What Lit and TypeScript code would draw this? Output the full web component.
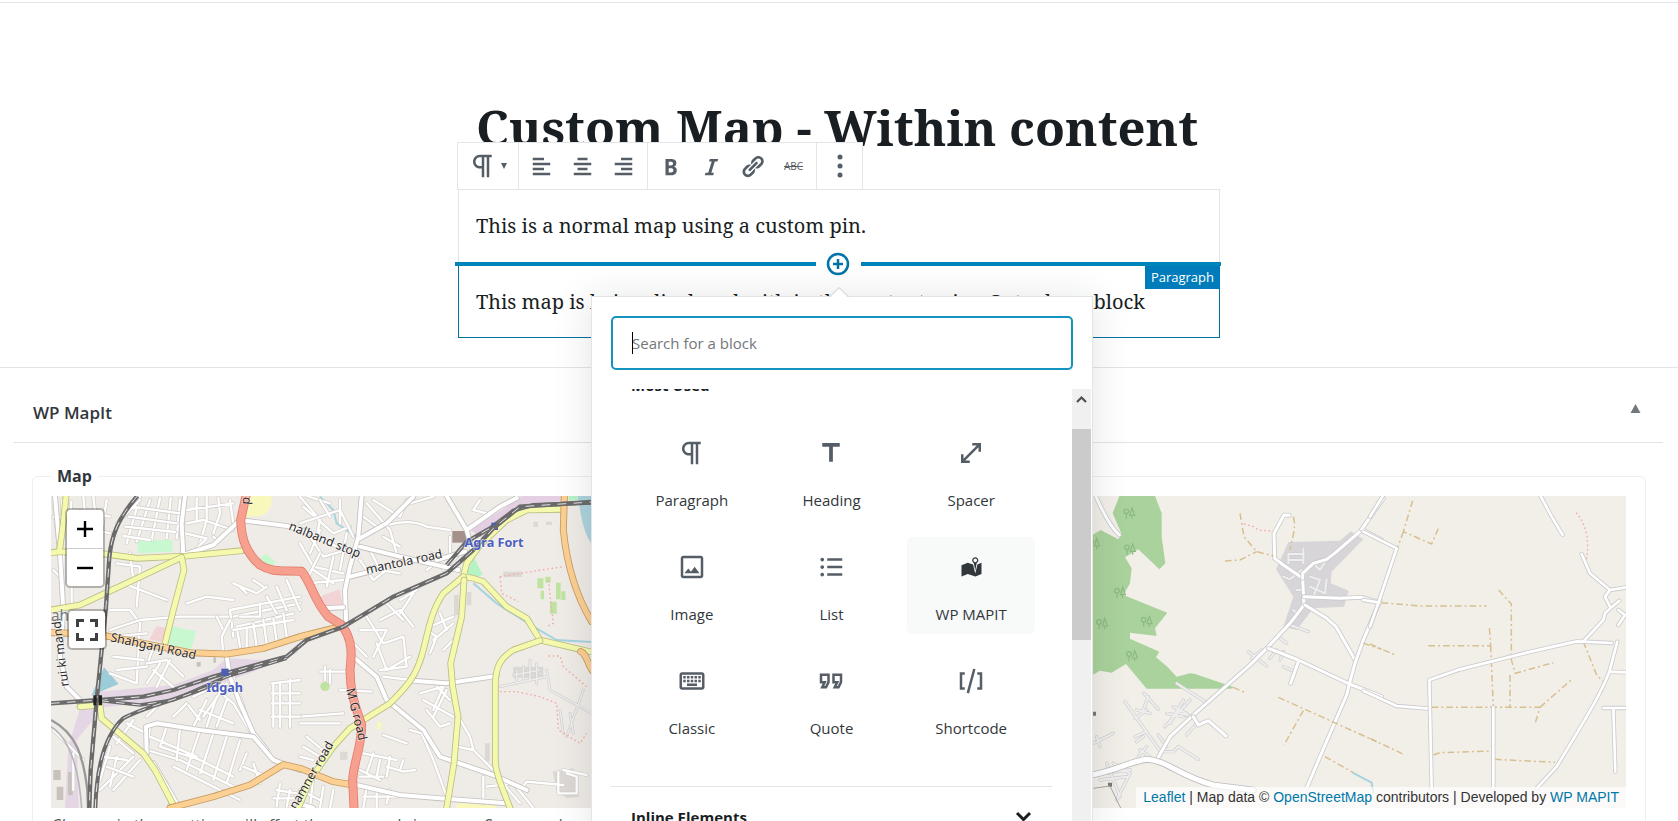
import { LitElement, html, svg, css } from "lit";
import { customElement } from "lit/decorators.js";

type BlockType = { label: string; icon: string; size?: number; active?: boolean };

const PARAGRAPH =
  "M11 5v7H9.5C7.6 12 6 10.4 6 8.5S7.6 5 9.5 5H11m8-2H9.5C6.5 3 4 5.5 4 8.5S6.5 14 9.5 14H11v7h2V5h2v16h2V5h2V3z";

const ALIGNMENTS = [
  { label: "Align left", d: "M12 5V3H3v2h9zm5 4V7H3v2h14zm-5 4v-2H3v2h9zm5 4v-2H3v2h14z" },
  { label: "Align center", d: "M14 5V3H6v2h8zm3 4V7H3v2h14zm-3 4v-2H6v2h8zm3 4v-2H3v2h14z" },
  { label: "Align right", d: "M17 5V3H8v2h9zm0 4V7H3v2h14zm0 4v-2H8v2h9zm0 4v-2H3v2h14z" },
];

const FORMATS = [
  {
    label: "Bold",
    d: "M6 4v13h4.54c1.37 0 2.46-.33 3.26-1 .8-.66 1.2-1.58 1.2-2.77 0-.84-.17-1.51-.51-2.01s-.9-.85-1.67-1.03v-.09c.57-.1 1.02-.4 1.36-.9s.51-1.13.51-1.91c0-1.14-.39-1.98-1.17-2.5C12.75 4.26 11.5 4 9.78 4H6zm2.57 5.15V6.26h1.36c.73 0 1.27.11 1.61.32.34.22.51.58.51 1.07 0 .54-.16.92-.47 1.15s-.82.35-1.51.35h-1.5zm0 2.19h1.6c1.44 0 2.16.53 2.16 1.61 0 .6-.17 1.05-.51 1.34s-.86.43-1.57.43H8.57v-3.38z",
  },
  { label: "Italic", d: "M14.78 6h-2.13l-2.8 9h2.12l-.62 2H4.6l.62-2h2.14l2.8-9H8.03l.62-2h6.75z" },
  {
    label: "Link",
    d: "M17.74 2.76c1.68 1.69 1.68 4.41 0 6.1l-1.53 1.52c-1.12 1.12-2.7 1.47-4.14 1.09l2.62-2.61.76-.77.76-.76c.84-.84.84-2.2 0-3.04-.84-.85-2.2-.85-3.04 0l-.77.76-3.38 3.38c-.37-1.44-.02-3.02 1.1-4.14l1.52-1.53c1.69-1.68 4.42-1.68 6.1 0zM8.59 13.43l5.34-5.34c.42-.42.42-1.1 0-1.52-.44-.43-1.13-.39-1.53 0l-5.33 5.34c-.42.42-.42 1.1 0 1.52.44.43 1.13.39 1.52 0zm-.76 2.29l4.14-4.15c.38 1.44.03 3.02-1.09 4.14l-1.52 1.53c-1.69 1.68-4.41 1.68-6.1 0-1.68-1.68-1.68-4.42 0-6.1l1.53-1.52c1.12-1.12 2.7-1.47 4.14-1.1l-4.14 4.15c-.85.84-.85 2.2 0 3.05.84.84 2.2.84 3.04 0z",
  },
];

const BLOCKS: BlockType[] = [
  { label: "Paragraph", icon: PARAGRAPH },
  { label: "Heading", icon: "M5 4v3h5.5v12h3V7H19V4z" },
  { label: "Spacer", icon: "M13 4v2h3.59L6 16.59V13H4v7h7v-2H7.41L18 7.41V11h2V4h-7" },
  {
    label: "Image",
    icon: "M19 5v14H5V5h14m0-2H5c-1.1 0-2 .9-2 2v14c0 1.1.9 2 2 2h14c1.1 0 2-.9 2-2V5c0-1.1-.9-2-2-2zM14.14 11.86l-3 3.87L9 13.14 6 17h12l-3.86-5.14z",
  },
  {
    label: "List",
    icon: "M9 19h12v-2H9v2zm0-6h12v-2H9v2zm0-8v2h12V5H9zm-4-.5c-.83 0-1.5.67-1.5 1.5S4.17 7.5 5 7.5 6.5 6.83 6.5 6 5.83 4.5 5 4.5zm0 6c-.83 0-1.5.67-1.5 1.5s.67 1.5 1.5 1.5 1.5-.67 1.5-1.5-.67-1.5-1.5-1.5zm0 6c-.83 0-1.5.67-1.5 1.5s.67 1.5 1.5 1.5 1.5-.67 1.5-1.5-.67-1.5-1.5-1.5z",
  },
  {
    label: "WP MAPIT",
    size: 20,
    active: true,
    icon: "M13 13.14l1.17-5.94c.79-.43 1.33-1.25 1.33-2.2 0-1.38-1.12-2.5-2.5-2.5S10.5 3.62 10.5 5c0 .95.54 1.77 1.33 2.2zm0-9.64c.83 0 1.5.67 1.5 1.5s-.67 1.5-1.5 1.5-1.5-.67-1.5-1.5.67-1.5 1.5-1.5zm1.72 4.8L18 6.97v9L13.12 18 7 15.97l-5 2v-9l5-2 4.27 1.41 1.73 7.3z",
  },
  {
    label: "Classic",
    icon: "M20 7v10H4V7h16m0-2H4c-1.1 0-2 .9-2 2v10c0 1.1.9 2 2 2h16c1.1 0 2-.9 2-2V7c0-1.1-.9-2-2-2zM11 8h2v2h-2zM11 11h2v2h-2zM8 8h2v2H8zM8 11h2v2H8zM5 11h2v2H5zM5 8h2v2H5zM8 14h8v2H8zM14 11h2v2h-2zM14 8h2v2h-2zM17 11h2v2h-2zM17 8h2v2h-2z",
  },
  {
    label: "Quote",
    icon: "M18.62 18h-5.24l2-4H13V6h8v7.24L18.62 18zm-2-2h.76L19 12.76V8h-4v4h3.62l-2 4zm-8 2H3.38l2-4H3V6h8v7.24L8.62 18zm-2-2h.76L9 12.76V8H5v4h3.62l-2 4z",
  },
  {
    label: "Shortcode",
    icon: "M8.5 21.4l1.9.5 5.2-19.3-1.9-.5-5.2 19.3zM3 19h4v-2H5V7h2V5H3v14zM17 5v2h2v10h-2v2h4V5h-4z",
  },
];

/* A street is a wide casing line with a narrower fill on top. */
const way = (d: string, fill: string, casing: string, width: number, edge = 5) => svg`
  <path d=${d} fill="none" stroke=${casing} stroke-width=${width + edge} stroke-linejoin="round" stroke-linecap="round" />
  <path d=${d} fill="none" stroke=${fill} stroke-width=${width} stroke-linejoin="round" stroke-linecap="round" />`;

const minor = (d: string) => way(d, "#fff", "#d0cdcb", 7, 4);
const street = (d: string) => way(d, "#fff", "#c4c1c0", 12);
const yellow = (d: string) => way(d, "#f4f9ad", "#b9bd80", 15);
const orange = (d: string) => way(d, "#fccf93", "#c49b60", 16);
const red = (d: string) => way(d, "#f8a08f", "#e07d6e", 22);
const rail = (d: string, width = 10) => svg`
  <path d=${d} fill="none" stroke="#6a6a6a" stroke-width=${width} />
  <path d=${d} fill="none" stroke="#e6e4e4" stroke-width="3" stroke-dasharray="26 22" />`;
const track = (d: string) => svg`
  <path d=${d} fill="none" stroke="#d8bf90" stroke-width="4.5" stroke-dasharray="20 9 6 9" />`;
const path = (d: string) => svg`
  <path d=${d} fill="none" stroke="#f3aaa2" stroke-width="4" stroke-dasharray="5 8" />`;

/* The street network left of the railway, and the dense blocks around it. */
const westTown = svg`
  <path fill="#e4d6e4" d="M240 715 L300 665 L520 645 L640 600 L680 565 L790 570 L900 545 L760 605 L520 690 L310 712 L230 810 L236 1014 L195 1014 L205 830Z" />
  <path fill="#c8f8d0" d="M415 210H518V245L412 250Z M512 468L588 484L574 538L498 524Z M780 262L800 252L826 276L816 292L786 280Z" />
  <path fill="#f2d3d6" d="M470 468L515 478L495 520L448 508Z" />
  <path fill="#f9f8bc" d="M745 78H812C822 100 806 140 770 138L738 142Z" />
  <path fill="#9ccbd9" d="M312 592L356 642L318 658L274 678L290 640Z" />
  <g fill="#c8c2bd"><path d="M160 900h22v30h-22z M170 950h20v40h-20z M204 906h14v70h-14z M590 576h12v14h-12z M640 562h8v16h-8z" /></g>
  ${[
    "M160 90L172 200M186 90V200M214 96L210 190M190 250V410M160 300L190 330M215 350V400L190 420M160 140H200",
    "M220 120L330 140M250 78L262 210M280 78L290 170M240 170L330 190M320 90L300 210",
    "M420 80L380 220M450 90L410 215M480 84L455 210M512 84L500 205M540 90L530 205",
    "M396 110L540 130M386 140L530 160M376 170L526 186M370 198L450 210M350 160L420 90",
    "M560 120L700 100M590 84V150M620 80V150L600 220M655 84L660 130L640 190M690 90L700 160M560 160L610 150L700 180",
    "M556 190L620 205L590 236M640 200L655 215",
    "M350 280L420 290L410 410M370 340L500 390M390 250L400 330M330 420L390 420L420 460L410 640L330 610",
    "M330 480L420 450L540 440L700 440L900 400M340 500L440 490M340 560L430 570M350 600L440 590L460 530",
    "M650 440L670 480M560 400L620 380L700 390M700 340L770 370L800 350M720 350L740 370M760 330L790 350",
    "M780 400V440L720 440M800 380L830 430M830 350L860 420M860 330L900 420M700 500L690 420L900 380M720 530L710 470L880 430",
    "M740 540V480M770 530L760 460M800 520L790 450M830 515L820 445M860 500L850 430M700 480L880 450M670 550L665 500L690 450",
    "M440 580L500 570L550 620M460 600L530 660M480 580L440 640M510 570L470 650",
    "M580 680L640 650L700 700L760 800M600 720L700 760M620 690L580 770M650 680L620 770M680 690L650 770M560 700L600 750M700 620L740 740M680 640L610 740",
    "M450 770L440 840L540 870L700 950M500 770L480 830L600 870M540 775L530 870M450 800L590 860M600 780L560 900M640 790L600 910M680 800L640 930M720 810L680 940M520 890L720 990M560 850L700 920M740 850L720 900",
    "M400 750L350 820M380 760L440 790M340 800L400 850M310 860L380 870M330 830L300 930M400 860L300 960M420 870L340 960M350 860L330 950M440 870L500 940L510 1000",
    "M320 890L400 920M440 740L480 700M520 740L560 700M820 640V770M840 640V770M870 630V770M900 630L815 640M815 670H900M815 700H900M815 740H900",
    "M760 880L780 940M730 890L800 920M830 960L890 970M840 940L830 1010M870 960L860 1010M820 985H900M220 850V960M160 780L250 870",
  ].map(minor)}
  ${[
    "M165 78L180 250L190 420L180 560L200 650L240 690",
    "M555 78L545 160L550 255L640 225L720 150",
    "M680 560L690 620L720 700L760 790L800 840",
    "M440 850L438 770L470 760L600 780L760 800L820 870L900 900",
    "M530 1000L460 880",
    "M735 152L860 168L920 185",
  ].map(street)}
  ${yellow("M198 78L190 160L178 245L153 248 M178 245L300 250L410 265L560 258L725 242")}
  ${yellow("M153 420L240 405L380 340L545 262L552 300L520 420L495 520 M240 710L300 705L305 745L430 850L465 900L525 1014")}
  ${orange("M153 488H180L320 498L430 520L570 548L680 552L790 535L900 500L980 480L1022 470")}
  ${orange("M510 1014L640 980L750 945L850 884L900 895L1000 935L1060 945")}
  ${red("M738 78L722 150C724 210 740 250 780 285C820 310 850 300 905 304C935 340 940 390 985 440L1025 465C1060 510 1055 560 1050 600C1050 680 1075 730 1085 765C1085 830 1060 880 1058 930L1062 1014")}
  <path d="M153 750C230 790 250 860 262 960L264 1014" fill="none" stroke="#9b989a" stroke-width="7" />
  <path d="M153 770C200 800 235 870 245 1014" fill="none" stroke="#b9b5b9" stroke-width="5" />
  ${rail("M412 78C350 150 335 200 328 260L318 410L306 530L290 690L272 900L268 1014", 13)}
  ${rail("M153 700L300 690L430 680L520 660L640 620L860 560L920 510L1030 470L1180 380L1340 310L1420 240L1480 175L1560 110L1775 96", 13)}
  ${rail("M300 692L420 705L520 690L680 620L860 565", 10)}
  ${rail("M286 1014C290 880 320 790 370 745C430 710 540 690 660 635", 12)}
`;

const eastTown = svg`
  <path fill="#e4d0e2" d="M510 178L610 118L665 78H785V92L660 112L600 160L545 205Z" />
  <path fill="#add3de" d="M832 78H875V222C845 180 842 120 832 78Z" />
  <path fill="#b6f3c4" d="M522 262L548 315L520 322L500 310Z M806 78H830L835 90L806 92Z" />
  <path fill="#f2d3d6" d="M58 380L118 358L130 410L80 412Z" />
  <path fill="#a3918a" d="M457 183H498V218H457Z" />
  <path fill="#f9f8bc" d="M470 1000H580L590 1014H470Z M232 752L246 758L242 780L230 776Z" />
  <g fill="#bfe3a0"><path d="M712 325h18v30h-18z M736 320h16v18h-16z M768 338h14v50h-14z M784 364h12v26h-12z M722 362h10v26h-10z M750 395h20v36h-20z" /></g>
  <circle cx="75" cy="649" r="14" fill="#bfe3a0" />
  <g fill="#dcd8d4"><path d="M758 905L820 895L838 980L800 985L770 960Z M462 375h14v60h-14z M500 366h14v40h-14z M640 590h90v34h-90z M555 820h14v54h-14z M120 845h22v24h-22z M700 155h14v16h-14z M738 155h18v10h-18z M610 305h56v16h-56z" /></g>
  <path d="M60 80L100 120L110 160L170 200M520 340L590 400L700 470L770 510L875 516" fill="none" stroke="#a5d3e0" stroke-width="6" />
  ${[
    "M0 80L60 150L50 200L110 230M20 78L90 100M10 110L100 190L150 170M30 200L70 260L140 240M0 220L40 290L130 310M60 180L30 250",
    "M0 160L120 120L160 200M90 140L60 90M120 90V160M40 300L100 340M60 250L20 330M100 260L80 350M20 340L130 330M140 190L120 300",
    "M200 100L270 180L290 250M220 90L300 140L320 90M200 190C280 150 340 150 380 170L450 180M190 140L230 170M250 200L300 230M330 100L400 80M210 240L240 300L300 310M180 270L220 330L260 300",
    "M200 440L250 520L310 500L320 590L240 600M240 450L300 420L340 470M180 480L260 480L220 560M260 400L310 450M340 370L300 430M150 510L200 560M230 520L260 600L330 560M300 390L350 360",
    "M390 470L460 440M400 510L460 460M390 550L410 500L380 480M420 430L440 480M430 540L460 510",
    "M60 605H140M75 590V630M90 600V640M120 660L215 665M250 620L330 630M0 740L130 730M0 760H120",
    "M360 670L430 650L400 720M370 690L460 740M410 650L450 690M380 720L420 770L450 760M440 660L400 740",
    "M250 795L320 820M190 850L290 870M220 850L200 910M240 870L230 920M270 860L260 920M180 900L240 930M260 890L310 905L345 900M310 870L300 900M180 920H250",
    "M475 740L510 800L520 840L470 830M520 840L590 910M10 830L60 860M20 800L80 850M0 860L40 870M0 960L60 990M40 920L30 1014M70 950L60 1014M100 960L90 1014M200 950L190 1014M230 960V1014M270 960L260 1000M190 980H290",
    "M330 780L365 790L400 870L440 980M550 920V1000M560 950L640 940L700 1014M600 930L660 1000M660 960L680 935L790 945M775 905V970H830V920L800 910M790 900L860 915",
    "M450 200V260L390 250M470 260L430 300M540 90L520 120L560 130M420 270L380 300",
  ].map(minor)}
  ${[
    "M600 650L740 620M650 600V640M670 590V635M690 570V630M710 580V640M640 615L720 600M740 600L750 660L875 730M850 660L800 800M780 720L790 790M810 730L820 790",
  ].map((d) => way(d, "#ececec", "#cccacb", 5, 3))}
  ${[
    "M185 78L175 200L150 290L135 360L138 450 M180 230L300 260L410 285L475 300 M410 270L495 245 M180 205L260 160L340 80 M440 78L500 180L520 250 M500 180L600 110L650 84 M150 320L210 305",
    "M165 565L230 620L260 690L370 780L420 860L580 915L680 960 M340 632L440 640L590 618 M170 945L300 975L420 985L620 1000 M0 1002L40 1014 M70 415L130 412",
  ].map(street)}
  ${yellow("M785 118L680 120L620 150L540 225L500 280L490 320L520 325L550 335L620 410L680 445L720 510L870 545")}
  ${yellow("M490 320L430 370C395 420 385 480 370 540C350 620 320 650 270 700L150 775L100 830L30 930L-5 1014")}
  ${yellow("M492 330L485 440L452 580L458 650L474 740L462 880L440 1014")}
  ${yellow("M720 512L640 540C600 565 588 590 586 640V880C590 920 610 960 630 1014")}
  ${orange("M793 78L790 180C800 280 830 380 875 455 M842 545C860 550 865 590 880 605")}
  ${path("M600 320L660 310L790 290M600 320L605 370L655 395M745 330L760 460L740 470M745 558H780L790 590L860 650M600 665L650 665L720 680L770 700L775 780L840 820L860 790")}
  ${rail("M440 285L500 215L570 175L640 122L700 105L875 98", 12)}
  <path fill="#4d5fae" d="M574 158h20v22h-20z" />
`;

const forest = svg`
  <path fill="#aad29c" d="M118 48H225L245 100V170L256 250L238 268L175 208L135 232L155 265L150 310L130 345L262 398L225 445L230 468L150 458V476L238 515L228 532L262 560L290 590L330 580L345 582L462 622L452 626H200L138 552L95 578L60 572L36 586V166L62 150L115 178L124 160L98 100Z" />
  <g fill="none" stroke="#8cb981" stroke-width="3.5">
    ${[[148, 100], [150, 208], [120, 338], [66, 432], [200, 425], [156, 528], [42, 192]].map(
      ([x, y]) => svg`<circle cx=${x - 9} cy=${y - 6} r="7" /><path d=${`M${x - 9} ${y + 1}V${y + 16}M${x + 8} ${y - 16}L${x + 1} ${y + 6}H${x + 16}ZM${x + 8} ${y + 6}V${y + 16}`} />`
    )}
  </g>
  <path fill="#d7d5d8" d="M625 186L780 182L812 154L850 178L755 275L752 310L806 332L792 380L700 385L650 450L610 440L640 350L588 268Z" />
  ${[
    "M192 640L235 688M205 650L190 690M135 665L245 820M165 715L200 690M170 690L210 700M165 770L200 755M170 785L190 770M280 680L320 700M260 700L310 710M255 740L330 660M270 730L310 660M300 700L340 710M40 790L100 760M60 800L50 770M250 815L280 815L295 800L355 838M235 765L260 800",
    "M320 765L350 730M60 880L150 870M60 900L140 890M80 850L120 950M100 850L150 880L110 960M175 830L200 800M180 810L210 830M290 610L375 665",
    "M625 225V250M670 205V250M625 222H672M625 240H665M610 290L630 298L665 270M690 320L735 340L740 298M690 290L720 300L700 350M700 250L720 270L735 245M650 330H670M655 405L640 390M630 435L685 455M600 475L620 490M505 515L560 558M515 535L545 510M570 535L590 510M600 540L610 515M610 560L645 575",
  ].map((d) => way(d, "#efeeee", "#cfced0", 6, 4))}
  ${[
    "M48 50C70 100 90 140 118 165",
    "M628 106L612 105L582 160L584 235L610 255L668 295L672 375L630 430L560 505L510 555L340 705L270 770L235 832",
    "M845 150L770 215L740 238L700 250L668 280L668 295M672 350L780 355L845 352L900 368M675 375L740 415L768 440L825 540",
    "M910 55L845 148L905 180M900 362L850 480L825 550L808 612L800 645L720 830L682 920M565 505L655 540L808 612L905 650M655 545L632 610M340 710L355 735L385 722L438 768",
  ].map((d) => way(d, "#fff", "#cbcbce", 9, 5))}
  ${way("M36 885C110 870 150 845 200 838C260 840 300 890 400 915L520 930", "#fff", "#bcbcbf", 15)}
  <path fill="#7d7878" d="M38 695h10v12h-10z M84 908h12v12h-12z" />
  <path d="M40 925L90 918L122 984" fill="none" stroke="#aaa6a4" stroke-width="3" />
  ${track("M480 100L492 170L530 215L580 228M435 243L480 240L530 215M640 110C650 140 635 180 630 210M460 622L500 640M595 652L890 785M670 692L612 795M850 490L905 508M735 830L820 878")}
  ${path("M492 132L520 140L535 150L580 154")}
  <path d="M818 878L875 908L880 940" fill="none" stroke="#a5d3e0" stroke-width="6" />
`;

const fields = svg`
  ${track("M128 62L100 155L185 192L208 138M100 155L82 205M35 368L150 378H350M0 492L75 525M175 497H362L358 440M362 497L370 682M185 682H510L495 732M510 682L608 596M386 330L424 372V540L436 580L550 548M420 585V682M640 485L680 585L700 605M0 775L105 825M190 825L210 818L370 813M375 838L555 847")}
  ${path("M618 98C650 130 660 190 648 245")}
  ${[
    "M40 45L0 110M-20 155L80 205L28 360L0 440M-20 360L28 368M-20 632L80 678L178 686",
    "M185 925L178 600L270 568L470 518L620 484L725 489M640 484L700 420L705 400L722 384L705 350L720 330L770 322M720 330L660 280L635 222M722 384L748 362M745 390L765 405L745 435",
    "M370 925V682M512 48L545 110L578 165M500 925L560 860C620 760 690 650 718 575L742 485M718 575L770 577M700 684H770M730 684L736 875",
  ].map((d) => way(d, "#fff", "#cbcbce", 8, 5))}
`;

const mapArt = html`
  <svg class="tiles" viewBox="153 78 4725 936" preserveAspectRatio="xMinYMin slice" role="img" aria-label="Street map of Agra">
    <rect x="153" y="78" width="9000" height="936" fill="#f2efe9" />
    <rect x="153" y="78" width="1640" height="936" fill="#efebe6" />
    <g transform="translate(900 0)">${eastTown}</g>
    ${westTown}
    <g transform="translate(3240 30)">${forest}</g>
    <g transform="translate(4110 30)">${fields}</g>
    <path d="M664 596h22v22h-22z" fill="#4d5fae" />
    <path d="M280 676h10v30h-10z M296 676h10v30h-10z" fill="#222" />
    <g class="map-label">
      <text transform="translate(330 514) rotate(12)">Shahganj Road</text>
      <text transform="translate(206 648) rotate(-97)">rui ki mandi</text>
      <text transform="translate(153 452)" class="faint">ah</text>
      <text transform="translate(864 178) rotate(22)">nalband stop</text>
      <text transform="translate(1100 312) rotate(-12)">mantola road</text>
      <text transform="translate(1038 658) rotate(76)">M G road</text>
      <text transform="translate(748 104) rotate(-86)">pu</text>
      <text transform="translate(888 1020) rotate(-60)">namner road</text>
      <text x="1482" y="232" text-anchor="middle" class="station">Agra Fort</text>
      <text x="674" y="667" text-anchor="middle" class="station">Idgah</text>
    </g>
  </svg>
`;

const icon = (d: string, box: number, size: number) => html`
  <svg width=${size} height=${size} viewBox="0 0 ${box} ${box}" aria-hidden="true"><path d=${d} /></svg>
`;

@customElement("block-toolbar")
export class BlockToolbar extends LitElement {
  static styles = css`
    :host {
      display: flex;
      background: #fff;
      border: 1px solid #e2e4e7;
      color: #555d66;
      font-family: "Open Sans", "Noto Sans", sans-serif;
    }
    .group {
      display: flex;
      padding: 0 2px;
      border-right: 1px solid #e2e4e7;
    }
    .group:last-child {
      border-right: 0;
    }
    button {
      display: flex;
      align-items: center;
      justify-content: center;
      width: 41px;
      height: 46px;
      padding: 0;
      border: 0;
      background: none;
      color: inherit;
      font: inherit;
    }
    .switcher {
      width: 56px;
      gap: 2px;
    }
    .aligns {
      padding-right: 3px;
    }
    .strike {
      font-size: 10px;
      text-decoration: line-through;
    }
    svg {
      fill: currentColor;
    }
  `;

  render() {
    return html`
      <div class="group">
        <button class="switcher" aria-label="Change block type">
          ${icon(PARAGRAPH, 24, 30)}
          <svg width="8" height="8" viewBox="0 0 8 8" aria-hidden="true"><path d="M1 1h6L4 7z" /></svg>
        </button>
      </div>
      <div class="group aligns">
        ${ALIGNMENTS.map((a) => html`<button aria-label=${a.label}>${icon(a.d, 20, 25)}</button>`)}
      </div>
      <div class="group">
        ${FORMATS.map((f) => html`<button aria-label=${f.label}>${icon(f.d, 20, 25)}</button>`)}
        <button class="strike" aria-label="Strikethrough">ABC</button>
      </div>
      <div class="group">
        <button aria-label="More options">
          <svg width="6" height="24" viewBox="0 0 6 24" aria-hidden="true">
            <circle cx="3" cy="3" r="2.5" /><circle cx="3" cy="12" r="2.5" /><circle cx="3" cy="21" r="2.5" />
          </svg>
        </button>
      </div>
    `;
  }
}

@customElement("block-inserter")
export class BlockInserter extends LitElement {
  static styles = css`
    :host {
      display: flex;
      flex-direction: column;
      box-sizing: border-box;
      width: 502px;
      height: 540px;
      background: #fff;
      border: 1px solid #e2e4e7;
      box-shadow: 0 3px 38px rgba(25, 30, 35, 0.12);
      font-family: "Open Sans", "Noto Sans", sans-serif;
      font-size: 15px;
      color: #32373c;
    }
    .arrow {
      position: absolute;
      left: 50%;
      top: -10px;
      margin-left: -17px;
    }
    .search {
      position: relative;
      padding: 19px;
    }
    .search input {
      box-sizing: border-box;
      display: block;
      width: 100%;
      height: 54px;
      padding: 0 19px;
      border: 2px solid #1393bd;
      border-radius: 5px;
      outline: 0;
      background: #fff;
      color: #32373c;
      font: inherit;
    }
    .search input::placeholder {
      color: #72777c;
      opacity: 1;
    }
    .caret {
      position: absolute;
      left: 40px;
      top: 35px;
      width: 1px;
      height: 22px;
      background: #000;
    }
    .results {
      display: flex;
      flex: 1;
      min-height: 0;
    }
    .list {
      flex: 1;
      overflow: auto;
      scrollbar-width: none;
      padding: 0 20px 0 19px;
    }
    .bar {
      width: 19px;
      margin-right: 1px;
      background: #f0f0f0;
    }
    .bar svg {
      display: block;
    }
    .thumb {
      height: 211px;
      background: #cbcbcb;
    }
    h2 {
      margin: 0;
      font-size: 15px;
      line-height: 20px;
      font-weight: 700;
      color: #191e23;
    }
    .most h2 {
      padding: 0 20px;
      margin-bottom: 28px;
    }
    .grid {
      display: grid;
      grid-template-columns: repeat(3, 1fr);
      gap: 17px 12px;
      margin: 0 17px;
      padding-bottom: 38px;
    }
    .tile {
      display: flex;
      flex-direction: column;
      align-items: center;
      gap: 20px;
      height: 97px;
      padding: 15px 0 0;
      border: 0;
      border-radius: 5px;
      background: none;
      color: #32373c;
      font: inherit;
      line-height: 24px;
    }
    .tile svg {
      fill: #555d66;
    }
    .tile.active {
      background: #f8f9f9;
    }
    .tile.active svg {
      fill: #32373c;
      margin: 2px 0 3px;
    }
    .panel {
      display: flex;
      align-items: center;
      justify-content: space-between;
      width: 100%;
      padding: 20px;
      border: 0;
      border-top: 1px solid #e2e4e7;
      background: none;
      text-align: left;
      font: inherit;
    }
  `;

  firstUpdated() {
    this.renderRoot.querySelector(".list")!.scrollTop = 14;
  }

  render() {
    return html`
      <svg class="arrow" width="28" height="12" viewBox="0 0 28 12" aria-hidden="true">
        <path d="M4 12L14 1L24 12Z" fill="#fff" /><path d="M4 10L14 0.8L24 10" fill="none" stroke="#dcdee1" stroke-width="1.4" />
      </svg>
      <div class="search">
        <input type="search" aria-label="Search for a block" placeholder="Search for a block" />
        <span class="caret"></span>
      </div>
      <div class="results">
        <div class="list">
          <section class="most">
            <h2>Most Used</h2>
            <div class="grid">
              ${BLOCKS.map(
                (b) => html`
                  <button class="tile ${b.active ? "active" : ""}">
                    ${icon(b.icon, b.size ?? 24, b.size ? 25 : 30)}
                    <span>${b.label}</span>
                  </button>
                `
              )}
            </div>
          </section>
          <button class="panel" aria-expanded="false">
            <h2>Inline Elements</h2>
            <svg width="17" height="12" viewBox="0 0 17 12" aria-hidden="true">
              <path d="M2 2L8.500 8.500L15 2" fill="none" stroke="#191e23" stroke-width="3" />
            </svg>
          </button>
        </div>
        <div class="bar">
          <svg width="19" height="40" viewBox="0 0 19 40" aria-hidden="true">
            <path d="M5 13L9.500 8.500L14 13" fill="none" stroke="#505050" stroke-width="2.200" />
          </svg>
          <div class="thumb"></div>
        </div>
      </div>
    `;
  }
}

@customElement("map-view")
export class MapView extends LitElement {
  static styles = css`
    :host {
      display: block;
      position: relative;
      height: 312px;
      overflow: hidden;
      background: #f2efe9;
    }
    .tiles {
      display: block;
      width: 100%;
      height: 100%;
    }
    .map-label {
      font-family: "Noto Sans", "Open Sans", sans-serif;
      font-size: 37px;
      fill: #2c2c2c;
      paint-order: stroke;
      stroke: rgba(255, 255, 255, 0.6);
      stroke-width: 4px;
    }
    .faint {
      font-size: 46px;
      fill: #777;
    }
    .station {
      fill: #4d5fbe;
      font-weight: 700;
      font-size: 38px;
    }
    .controls {
      position: absolute;
      left: 14px;
      top: 12px;
      display: flex;
      flex-direction: column;
      gap: 21px;
    }
    .control {
      width: 36px;
      border: 2px solid rgba(0, 0, 0, 0.25);
      border-radius: 5px;
      background: #fff;
      background-clip: padding-box;
    }
    .control button {
      display: flex;
      align-items: center;
      justify-content: center;
      width: 100%;
      height: 38px;
      padding: 0;
      border: 0;
      background: none;
    }
    .control button + button {
      border-top: 1px solid #ccc;
    }
    .full {
      margin-left: 2px;
    }
    .full button {
      height: 37px;
    }
    .credit {
      position: absolute;
      right: 0;
      bottom: 0;
      padding: 0 7px;
      background: rgba(255, 255, 255, 0.7);
      color: #333;
      font: 14px/21px "Liberation Sans", Arial, sans-serif;
    }
    a {
      color: #0078a8;
      text-decoration: none;
    }
  `;

  render() {
    return html`
      ${mapArt}
      <div class="controls">
        <div class="control">
          <button aria-label="Zoom in">
            <svg width="16" height="16" viewBox="0 0 16 16"><path d="M0 8H16M8 0V16" stroke="#000" stroke-width="2.400" /></svg>
          </button>
          <button aria-label="Zoom out">
            <svg width="16" height="16" viewBox="0 0 16 16"><path d="M0 8H16" stroke="#000" stroke-width="2.400" /></svg>
          </button>
        </div>
        <div class="control full">
          <button aria-label="Full screen">
            <svg width="22" height="22" viewBox="0 0 22 22">
              <path d="M1.500 8V1.500H8M14 1.500H20.500V8M20.500 14V20.500H14M8 20.500H1.500V14" fill="none" stroke="#404040" stroke-width="3" />
            </svg>
          </button>
        </div>
      </div>
      <div class="credit">
        <a href="#leaflet">Leaflet</a> | Map data © <a href="#osm">OpenStreetMap</a> contributors | Developed by
        <a href="#wpmapit">WP MAPIT</a>
      </div>
    `;
  }
}

@customElement("app-root")
export class AppRoot extends LitElement {
  static styles = css`
    :host {
      display: block;
      box-sizing: border-box;
      height: 100vh;
      overflow: hidden;
      padding-top: 2px;
      background: #fff;
      font-family: "Open Sans", "Noto Sans", sans-serif;
      color: #32373c;
    }
    .editor {
      padding: 90px 20px 29px;
      border-top: 1px solid #e2e4e7;
      border-bottom: 1px solid #e2e4e7;
    }
    .column {
      max-width: 762px;
      margin: 0 auto;
      font-family: "Noto Serif", "DejaVu Serif Condensed", "DejaVu Serif", serif;
      color: #191e23;
    }
    h1 {
      margin: 0 0 28px;
      padding: 0 18px;
      font-size: 49px;
      line-height: 68px;
      font-weight: 700;
      white-space: nowrap;
    }
    .block {
      position: relative;
      padding: 17px 17px 19px;
      border: 1px solid #e2e4e7;
      font-size: 20px;
      line-height: 37px;
      white-space: nowrap;
    }
    .block p {
      margin: 0;
    }
    .block.hovered {
      margin-top: 1px;
      padding-bottom: 17px;
      border-color: #0071a1;
    }
    block-toolbar {
      position: absolute;
      left: -2px;
      bottom: 100%;
    }
    .tag {
      position: absolute;
      right: -1px;
      top: 0;
      padding: 0 6px;
      background: #007cba;
      color: #fff;
      font: 13px/23px "Open Sans", "Noto Sans", sans-serif;
    }
    .insertion {
      position: absolute;
      left: -4px;
      right: -2px;
      top: -14px;
      display: flex;
      align-items: center;
      height: 24px;
    }
    .insertion::before,
    .insertion::after {
      content: "";
      flex: 1;
      height: 4px;
      background: #0085ba;
    }
    .insertion button {
      display: flex;
      width: 45px;
      justify-content: center;
      padding: 0;
      border: 0;
      background: #fff;
    }
    block-inserter {
      position: absolute;
      z-index: 2;
      left: 50%;
      margin-left: -248px;
      top: 30px;
    }
    .metabox {
      margin: 0 15px 0 13px;
    }
    .metabox header {
      display: flex;
      align-items: center;
      justify-content: space-between;
      height: 74px;
      padding: 0 18px 0 20px;
      border-bottom: 1px solid #e2e4e7;
    }
    .metabox h2 {
      margin: 15px 0 0;
      font-size: 17px;
      line-height: 24px;
      font-weight: 600;
      color: #32373c;
    }
    .toggle {
      margin-top: 8px;
      padding: 4px;
      border: 0;
      background: none;
      line-height: 0;
    }
    fieldset {
      min-width: 0;
      margin: 20px 17px 0 19px;
      padding: 7px 19px 18px 18px;
      border: 1px solid #eee;
      border-radius: 6px;
    }
    legend {
      padding: 0 6px;
      font-size: 16px;
      line-height: 26px;
      font-weight: 700;
    }
    .hint {
      margin: 5px 0 0;
      font-size: 16px;
      line-height: 24px;
      font-style: italic;
      color: #555;
    }
  `;

  render() {
    return html`
      <main class="editor">
        <div class="column">
          <h1>Custom Map - Within content</h1>
          <div class="block">
            <p>This is a normal map using a custom pin.</p>
            <block-toolbar></block-toolbar>
          </div>
          <div class="block hovered">
            <p>This map is being displayed with in the content using Gutenberg block</p>
            <span class="tag">Paragraph</span>
            <div class="insertion">
              <button aria-label="Add block">
                <svg width="24" height="24" viewBox="0 0 24 24" aria-hidden="true">
                  <circle cx="12" cy="12" r="10" fill="#fff" stroke="#0073aa" stroke-width="2.500" />
                  <path d="M12 7V17M7 12H17" stroke="#0073aa" stroke-width="2.500" />
                </svg>
              </button>
            </div>
            <block-inserter></block-inserter>
          </div>
        </div>
      </main>
      <section class="metabox">
        <header>
          <h2>WP MapIt</h2>
          <button class="toggle" aria-label="Toggle panel: WP MapIt">
            <svg width="11" height="10" viewBox="0 0 11 10"><path d="M5.500 0L10.500 9H0.500Z" fill="#72777c" /></svg>
          </button>
        </header>
        <fieldset>
          <legend>Map</legend>
          <map-view></map-view>
          <p class="hint">Changes in these settings will effect the maps and views now. Some need</p>
        </fieldset>
      </section>
    `;
  }
}
